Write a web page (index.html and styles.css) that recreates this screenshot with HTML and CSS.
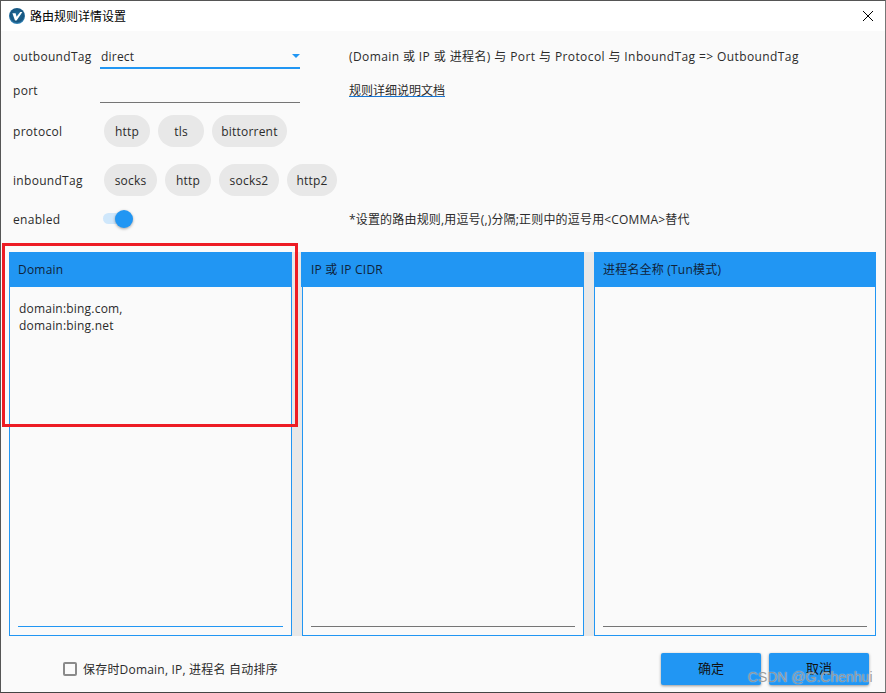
FILE: index.html
```html
<!DOCTYPE html>
<html lang="zh">
<head>
<meta charset="utf-8">
<title>路由规则详情设置</title>
<link rel="stylesheet" href="styles.css">
</head>
<body>
<div class="window">
  <header class="titlebar">
    <svg class="logo" viewBox="0 0 16 16" width="16" height="16" aria-hidden="true">
      <defs><radialGradient id="lg" cx="50%" cy="45%" r="55%"><stop offset="0" stop-color="#1f6f9f"/><stop offset="0.75" stop-color="#17557f"/><stop offset="1" stop-color="#3a8fc4"/></radialGradient></defs>
      <circle cx="8" cy="8" r="8" fill="url(#lg)"/>
      <path d="M3.4 5.2h3.2l1 3.6 3.6-4.8h2.2L7.6 12.4H6z" fill="#fff"/>
    </svg>
    <span class="title">路由规则详情设置</span>
    <svg class="close" viewBox="0 0 10 10" width="10" height="10" aria-hidden="true"><path d="M0 0L10 10M10 0L0 10" stroke="#000" stroke-width="1" fill="none"/></svg>
  </header>
  <main class="content">
    <section class="form">
      <div class="row row-outbound">
        <label class="label">outboundTag</label>
        <div class="combo"><span>direct</span><i class="caret"></i></div>
        <span class="note">(Domain 或 IP 或 进程名) 与 Port 与 Protocol 与 InboundTag =&gt; OutboundTag</span>
      </div>
      <div class="row row-port">
        <label class="label">port</label>
        <div class="input"></div>
        <a class="note link" href="#">规则详细说明文档</a>
      </div>
      <div class="row row-protocol">
        <label class="label">protocol</label>
        <div class="chips"><span class="chip c46">http</span><span class="chip c46">tls</span><span class="chip c75">bittorrent</span></div>
      </div>
      <div class="row row-inbound">
        <label class="label">inboundTag</label>
        <div class="chips"><span class="chip c53">socks</span><span class="chip c46">http</span><span class="chip c60">socks2</span><span class="chip c50">http2</span></div>
      </div>
      <div class="row row-enabled">
        <label class="label">enabled</label>
        <div class="toggle"><i class="track"></i><i class="thumb"></i></div>
        <span class="note">*设置的路由规则,用逗号(,)分隔;正则中的逗号用&lt;COMMA&gt;替代</span>
      </div>
    </section>
    <section class="panels">
      <article class="panel">
        <h2 class="panel-head">Domain</h2>
        <div class="panel-body active"><p class="panel-text">domain:bing.com,<br>domain:bing.net</p></div>
      </article>
      <div class="splitter"></div>
      <article class="panel panel-mid">
        <h2 class="panel-head">IP 或 IP CIDR</h2>
        <div class="panel-body"></div>
      </article>
      <div class="splitter"></div>
      <article class="panel">
        <h2 class="panel-head">进程名全称 (Tun模式)</h2>
        <div class="panel-body"></div>
      </article>
    </section>
    <footer class="footer">
      <label class="check"><i class="box"></i><span>保存时Domain, IP, 进程名 自动排序</span></label>
      <div class="buttons"><button class="btn">确定</button><button class="btn">取消</button></div>
    </footer>
  </main>
  <div class="annotation"></div>
  <div class="watermark">CSDN @G.Chenhui</div>
</div>
</body>
</html>
```
FILE: styles.css
```css
* { box-sizing: border-box; }
html, body { margin: 0; padding: 0; }
body {
  width: 886px; height: 693px; overflow: hidden;
  font-family: "Open Sans", "Noto Sans CJK SC", sans-serif;
  font-size: 12px; letter-spacing: .2px; color: #2b2b2b;
}
.window {
  position: relative; width: 886px; height: 693px;
  border: 1px solid #555; border-right-color: #777; border-bottom-color: #444;
  display: flex; flex-direction: column; background: #fafafa;
}
.titlebar {
  height: 30px; flex: none; background: #fff;
  display: flex; align-items: center; padding: 0 12px 0 8px; color: #000;
  letter-spacing: 0;
}
.logo { flex: none; margin-right: 5px; }
.title { flex: 1; font-size: 12px; }
.content { flex: 1; display: flex; flex-direction: column; min-height: 0; }
.form { flex: none; height: 221px; padding-left: 12px; }
.row { display: flex; align-items: center; }
.label { width: 87px; flex: none; letter-spacing: .3px; }
.row-outbound { height: 38px; margin-top: 6px; }
.row-outbound .note { letter-spacing: .4px; }
.row-port { height: 30px; }
.row-protocol { height: 52px; }
.row-inbound { height: 46px; }
.row-enabled { height: 32px; }
.combo {
  width: 200px; height: 32px; flex: none; align-self: flex-start; border-bottom: 2px solid #2196f3;
  display: flex; align-items: center; justify-content: space-between; padding: 8px 0 0 1px;
}
.caret { width: 0; height: 0; border: 4px solid transparent; border-top: 4px solid #2196f3; border-bottom: 0; }
.input { width: 200px; height: 28px; flex: none; align-self: flex-start; border-bottom: 1px solid #757575; }
.note { margin-left: 49px; white-space: nowrap; }
.link { color: #2b2b2b; text-decoration-color: #1976d2; letter-spacing: 0; }
.chips { display: flex; gap: 8px; padding-left: 4px; }
.chip {
  height: 32px; border-radius: 16px; background: #e8e8e8;
  display: flex; align-items: center; justify-content: center;
}
.c46 { width: 46px; } .c75 { width: 75px; } .c53 { width: 53px; } .c60 { width: 60px; } .c50 { width: 50px; }
.toggle { position: relative; width: 34px; height: 20px; flex: none; margin-left: 2px; margin-right: 213px; }
.track { position: absolute; left: 1px; top: 4px; width: 26px; height: 11px; border-radius: 6px; background: #cfe7fb; }
.thumb { position: absolute; left: 13px; top: 1px; width: 18px; height: 18px; border-radius: 50%; background: #2196f3; box-shadow: 0 1px 3px rgba(0,0,0,.35); }
.row-enabled .note { margin-left: 0; margin-bottom: 1px; letter-spacing: .17px; }
.panels { flex: none; height: 384px; margin-left: 8px; margin-right: 9px; display: flex; }
.panel { flex: none; width: 283px; display: flex; flex-direction: column; }
.panel + .splitter + .panel { width: 282px; }
.splitter { flex: none; width: 10px; background: #e8e8e8; }
.panel-head {
  margin: 0; height: 35px; flex: none; background: #2196f3; color: #10233a;
  font-size: 12px; font-weight: 400; display: flex; align-items: center; padding: 0 0 1px 9px;
}
.panel-mid .panel-head { margin-left: -1px; padding-left: 10px; }
.panel-body {
  flex: 1; border: 1px solid #2196f3; border-top: 0; padding: 0 8px 8px; background: #fafafa;
  display: flex; flex-direction: column; justify-content: space-between; position: relative;
}
.panel-body::after { content: ""; display: block; height: 1px; background: #757575; margin-top: auto; }
.panel-body.active::after { background: #2196f3; }
.panel-text { margin: 13px 0 0 1px; line-height: 17px; }
.footer { flex: 1; display: flex; align-items: center; justify-content: space-between; padding: 0 16px 0 62px; }
.check { display: flex; align-items: center; margin-top: 9px; }
.box { width: 14px; height: 14px; border: 2px solid #8a8a8a; border-radius: 2px; margin-right: 6px; }
.buttons { display: flex; gap: 8px; margin-top: 10px; }
.btn {
  width: 100px; height: 32px; border: 0; border-radius: 2px; background: #2196f3; color: #111;
  padding: 0 0 3px; font-family: inherit; font-size: 13px; letter-spacing: 0; box-shadow: 0 1px 3px rgba(0,0,0,.4);
}
.annotation { position: absolute; left: 1px; top: 242px; width: 296px; height: 184px; border: 3px solid #ed1c24; }
.watermark { position: absolute; left: 747px; top: 668px; font-family: "Liberation Sans", sans-serif; font-size: 14px; letter-spacing: 0; color: rgba(90,90,90,.6); text-shadow: 0 0 1px #fff; }
```
